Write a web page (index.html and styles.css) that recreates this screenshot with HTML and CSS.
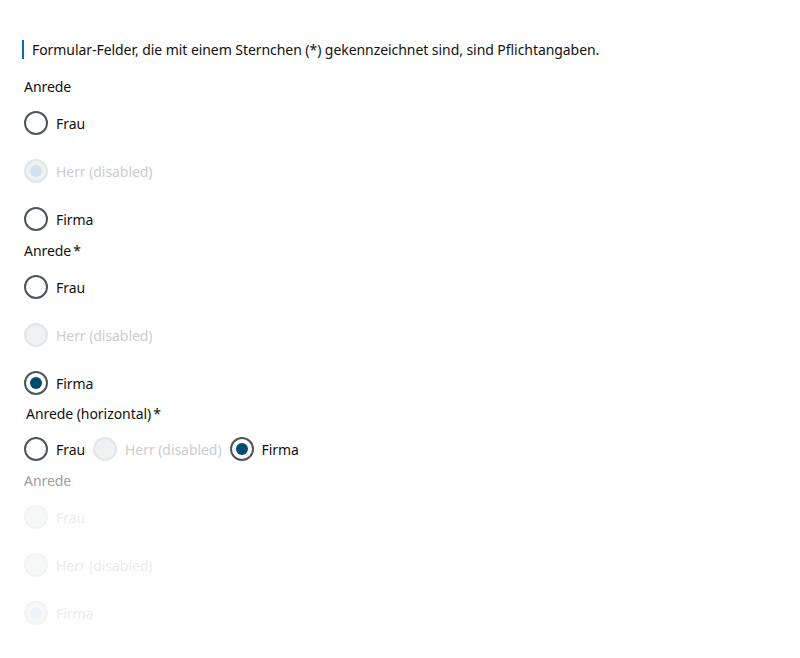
FILE: index.html
```html
<!DOCTYPE html>
<html lang="de">
<head>
<meta charset="utf-8">
<link rel="stylesheet" href="styles.css">
</head>
<body>
<main class="page">
  <p class="hint">Formular-Felder, die mit einem Sternchen (*) gekennzeichnet sind, sind Pflichtangaben.</p>

  <fieldset class="group group-first">
    <legend class="legend">Anrede</legend>
    <div class="options">
      <label class="option"><span class="radio"></span><span class="text">Frau</span></label>
      <label class="option is-disabled"><span class="radio is-checked"></span><span class="text">Herr (disabled)</span></label>
      <label class="option"><span class="radio"></span><span class="text">Firma</span></label>
    </div>
  </fieldset>

  <fieldset class="group">
    <legend class="legend">Anrede<span class="req">*</span></legend>
    <div class="options">
      <label class="option"><span class="radio"></span><span class="text">Frau</span></label>
      <label class="option is-disabled"><span class="radio"></span><span class="text">Herr (disabled)</span></label>
      <label class="option"><span class="radio is-checked"></span><span class="text">Firma</span></label>
    </div>
  </fieldset>

  <fieldset class="group group-h">
    <legend class="legend legend-h">Anrede (horizontal)<span class="req">*</span></legend>
    <div class="options options-h">
      <label class="option"><span class="radio"></span><span class="text">Frau</span></label>
      <label class="option is-disabled"><span class="radio"></span><span class="text">Herr (disabled)</span></label>
      <label class="option"><span class="radio is-checked"></span><span class="text">Firma</span></label>
    </div>
  </fieldset>

  <fieldset class="group is-off">
    <legend class="legend">Anrede</legend>
    <div class="options">
      <label class="option"><span class="radio"></span><span class="text">Frau</span></label>
      <label class="option"><span class="radio"></span><span class="text">Herr (disabled)</span></label>
      <label class="option"><span class="radio is-checked"></span><span class="text">Firma</span></label>
    </div>
  </fieldset>
</main>
</body>
</html>
```

FILE: styles.css
```css
* { box-sizing: border-box; }
html, body { margin: 0; padding: 0; background: #fff; }
body {
  font-family: "Noto Sans", "Open Sans", sans-serif;
  font-size: 14px;
  letter-spacing: -0.06px;
  color: #111;
}
.page { padding: 40px 24px 0 22px; }
.hint {
  margin: 0 0 16px 0;
  border-left: 2px solid #0a6ea8;
  padding-left: 8px;
  line-height: 19px;
  height: 19px;
}
.group {
  border: 0;
  margin: 0 0 1px 2px;
  padding: 0;
  min-width: 0;
}
.group-first { margin-bottom: 2px; }
.legend {
  padding: 0;
  line-height: 24px;
  height: 24px;
  margin-bottom: 6px;
}
.legend-h { padding-left: 2px; }
.req { margin-left: 2px; }
.options { display: flex; flex-direction: column; gap: 12px; }
.options-h { flex-direction: row; gap: 8px; margin-top: -2px; }
.group-h { padding-top: 1px; margin-bottom: 2px; }
.option {
  display: flex;
  align-items: center;
  height: 36px;
  gap: 8px;
}
.radio {
  width: 24px;
  height: 24px;
  border-radius: 50%;
  border: 2px solid #4e565b;
  background: #fff;
  display: flex;
  align-items: center;
  justify-content: center;
  flex: none;
}
.radio.is-checked::after {
  content: "";
  width: 12px;
  height: 12px;
  border-radius: 50%;
  background: #004b76;
}
.is-disabled .text { color: #cbcdcf; }
.is-disabled .radio { border-color: #e2e6e8; background: #eff1f2; }
.is-disabled .radio.is-checked::after { background: #d2e2ec; }

.is-off .legend { color: #9e9e9e; }
.is-off .text { color: #ececec; }
.is-off .radio { border-color: #f3f4f5; background: #f7f8f8; }
.is-off .radio.is-checked::after { background: #eef3f7; }
```
